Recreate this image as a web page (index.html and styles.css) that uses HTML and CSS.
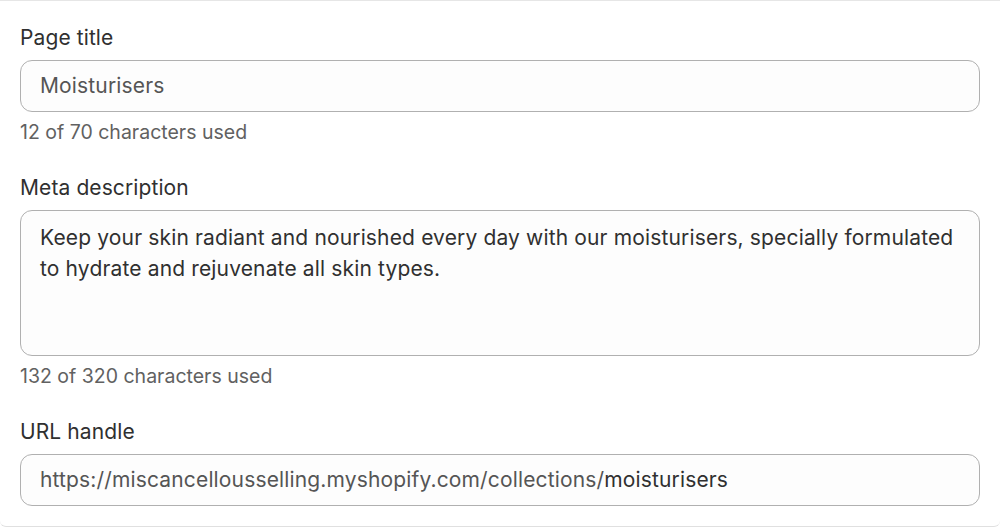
FILE: index.html
```html
<!DOCTYPE html>
<html lang="en">
<head>
<meta charset="utf-8">
<title>SEO</title>
<link rel="stylesheet" href="styles.css">
</head>
<body>
<div class="card">
  <div class="field">
    <label class="label" for="title">Page title</label>
    <div class="input muted" id="title">Moisturisers</div>
    <div class="help">12 of 70 characters used</div>
  </div>
  <div class="field">
    <label class="label" for="desc">Meta description</label>
    <div class="input area" id="desc">Keep your skin radiant and nourished every day with our moisturisers, specially formulated to hydrate and rejuvenate all skin types.</div>
    <div class="help">132 of 320 characters used</div>
  </div>
  <div class="field">
    <label class="label" for="url">URL handle</label>
    <div class="input muted" id="url">https://miscancellousselling.myshopify.com/collections/<span class="strong">moisturisers</span></div>
  </div>
</div>
</body>
</html>
```

FILE: styles.css
```css
html, body {
  margin: 0;
  padding: 0;
  background: #ffffff;
}
body {
  font-family: Inter, "Noto Sans", sans-serif;
  color: #303030;
  font-size: 21px;
  line-height: 30px;
}
.card {
  box-sizing: border-box;
  width: 1000px;
  height: 527px;
  border-top: 1px solid #e6e6e6;
  border-bottom: 1px solid #e0e0e0;
  border-radius: 0 0 6px 6px;
  padding: 22px 20px 0 20px;
  display: flex;
  flex-direction: column;
  gap: 26px;
}
.field {
  display: flex;
  flex-direction: column;
}
.label {
  display: block;
  color: #303030;
  margin-bottom: 7px;
  letter-spacing: 0.1px;
}
.input {
  box-sizing: border-box;
  border: 1px solid #b0b0b0;
  border-radius: 12px;
  background: #fdfdfd;
  padding: 10px 19px;
  color: #303030;
  letter-spacing: 0.15px;
}
.muted {
  color: #555555;
}
.strong {
  color: #303030;
}
.area {
  height: 146px;
  padding-top: 11px;
  line-height: 31px;
}
.help {
  color: #616161;
  font-size: 19.5px;
  margin-top: 5px;
}
```
